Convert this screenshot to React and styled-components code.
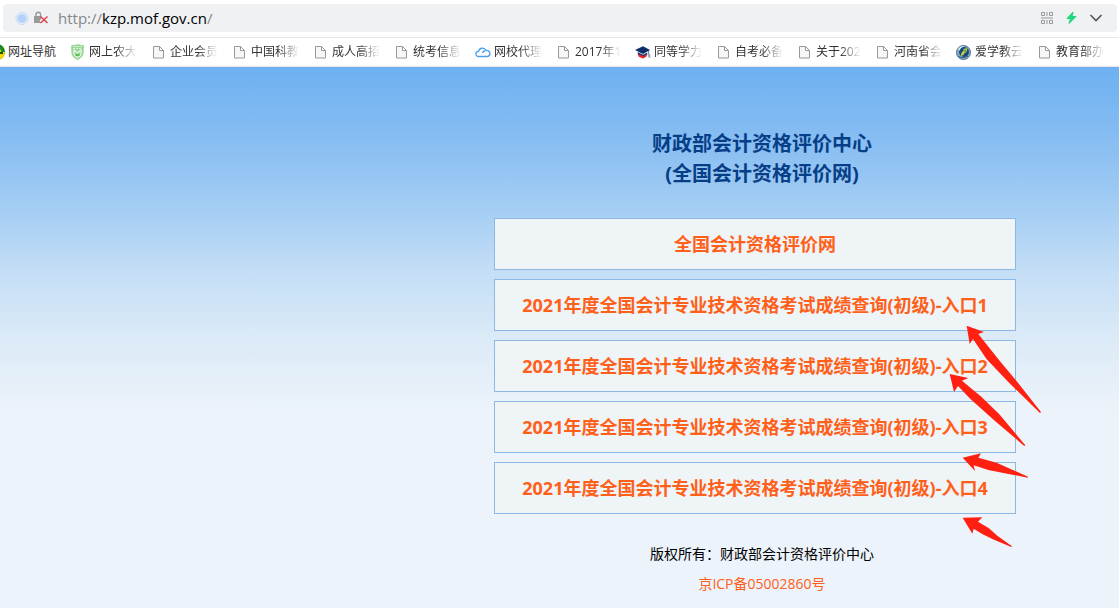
import React, { useState } from "react";
import styled, { createGlobalStyle, css } from "styled-components";

const BOOKMARKS = [
  { label: "网址导航", icon: "nav", full: true },
  { label: "网上农大", icon: "shield" },
  { label: "企业会员" },
  { label: "中国科教" },
  { label: "成人高招" },
  { label: "统考信息" },
  { label: "网校代理", icon: "cloud" },
  { label: "2017年1", width: 46 },
  { label: "同等学力", icon: "cap" },
  { label: "自考必备" },
  { label: "关于202", width: 45 },
  { label: "河南省会" },
  { label: "爱学教云", icon: "globe" },
  { label: "教育部办" }
];

const ENTRIES = [
  "全国会计资格评价网",
  "2021年度全国会计专业技术资格考试成绩查询(初级)-入口1",
  "2021年度全国会计专业技术资格考试成绩查询(初级)-入口2",
  "2021年度全国会计专业技术资格考试成绩查询(初级)-入口3",
  "2021年度全国会计专业技术资格考试成绩查询(初级)-入口4"
];

const GlobalStyle = createGlobalStyle`
  * {
    box-sizing: border-box;
  }

  body {
    margin: 0;
    overflow-x: hidden;
    background: #ecf3fa;
    font-family: "Open Sans", "Noto Sans CJK SC", sans-serif;
  }
`;

const Screen = styled.div`
  display: flex;
  flex-direction: column;
  min-height: 100vh;
`;

const Browser = styled.header`
  background: #fff;
`;

const AddressBar = styled.div`
  display: flex;
  align-items: center;
  height: 28px;
  margin: 4px 2px 5px 3px;
  padding: 0 14px 0 12px;
  border-radius: 4px;
  background: #eff1f3;
`;

const Url = styled.label`
  display: flex;
  flex: 1;
  align-items: center;
  margin-left: 9px;
  color: #85888b;
  font-size: 15px;
  line-height: 20px;
`;

const UrlInput = styled.input`
  field-sizing: content;
  padding: 0;
  border: 0;
  outline: 0;
  background: none;
  color: #000;
  font: inherit;
`;

const IconButton = styled.button`
  display: flex;
  padding: 0;
  border: 0;
  background: none;
  cursor: pointer;
`;

const Tools = styled.div`
  display: flex;
  align-items: center;
  gap: 10px;
`;

const BookmarkBar = styled.nav`
  display: flex;
  align-items: center;
  gap: 14px;
  height: 30px;
  margin-left: -11px;
  overflow: hidden;
  border-top: 1px solid #e6e6e6;
  border-bottom: 1px solid #e6e6e6;
`;

const Bookmark = styled.a`
  display: flex;
  flex: none;
  align-items: center;
  gap: 3px;
  color: #333;
  font-size: 12px;
  line-height: 18px;
  text-decoration: none;
`;

const BookmarkLabel = styled.span`
  width: ${({ width }) => width || 48}px;
  overflow: hidden;
  white-space: nowrap;
  ${({ $fade }) =>
    $fade &&
    css`
      mask-image: linear-gradient(to right, #000 55%, transparent);
    `}
`;

const Page = styled.main`
  flex: 1;
  padding: 62px 0 9px 405px;
  background: linear-gradient(
    #6db0f1,
    #8abff2 80px,
    #a9d0f4 152px,
    #c4def6 205px,
    #dbeaf7 270px,
    #ecf3fa 345px
  );
  text-align: center;
`;

const Title = styled.h1`
  margin: 0 0 29px;
  color: #063e87;
  font-size: 20px;
  line-height: 30px;
`;

const Entries = styled.div`
  position: relative;
  display: flex;
  flex-direction: column;
  gap: 9px;
  max-width: 522px;
  margin: 0 auto;
  left: -7px;
`;

const Entry = styled.a`
  padding: 10px 0;
  border: 1px solid #8bb8e4;
  background: #eff4f7;
  color: #ff6019;
  font-size: 18px;
  font-weight: bold;
  line-height: 30px;
  text-decoration: none;
  white-space: nowrap;
`;

const Arrows = styled.svg`
  position: absolute;
  top: 92px;
  left: 406px;
  fill: #ff2012;
  pointer-events: none;
`;

const Footer = styled.footer`
  margin-top: 25px;
  color: #000;
  font-size: 14px;
  line-height: 30px;
`;

const IcpLink = styled.a`
  display: block;
  color: #ff6019;
  text-decoration: none;
`;

const SiteIcon = () => (
  <svg width="16" height="16" viewBox="0 0 16 16">
    <circle cx="7" cy="8.500" r="6" fill="none" stroke="#c5d9fb" />
    <circle cx="7" cy="8.500" r="4.600" fill="#b5d0fc" />
  </svg>
);

const LockIcon = () => (
  <svg width="18" height="16" viewBox="0 0 18 16" fill="none">
    <path d="M5 7V4.500a2.300 2.300 0 0 1 4.600 0V7" stroke="#999" strokeWidth="1.400" />
    <path d="M3 6h7v3l-1.500 2 1.500 2H3z" fill="#999" />
    <path d="M9.500 6.500l7 6.500M16.500 6.500l-7 6.500" stroke="#e23a45" strokeWidth="1.400" />
  </svg>
);

const QrIcon = () => (
  <svg width="12" height="12" viewBox="0 0 12 12" fill="none" stroke="#999">
    <path d="M.5.5h3v3h-3zM8.500.5h3v3h-3zM.5 8.500h3v3h-3zM8.500 8.500h3v3h-3zM6 0v4M6 8v4M0 6h12" />
  </svg>
);

const BoltIcon = () => (
  <svg width="16" height="14" viewBox="0 0 16 14">
    <path d="M10 1 4 7.500h3.500L6 12.500l7-7H9z" fill="#20d77b" stroke="#20d77b" strokeLinejoin="round" />
  </svg>
);

const ChevronIcon = () => (
  <svg width="14" height="10" viewBox="0 0 14 10" fill="none" stroke="#555" strokeWidth="1.600">
    <path d="M1.500 2 7 7.500 12.500 2" />
  </svg>
);

const BookmarkIcon = ({ type }) => {
  switch (type) {
    case "nav":
      return (
        <svg width="16" height="16" viewBox="0 0 16 16">
          <circle cx="8" cy="8" r="8" fill="#188a23" />
          <path d="M0 8h16A8 8 0 0 1 0 8z" fill="#ffd500" />
          <path d="M8 4a4 4 0 0 1 4 4H8z" fill="#ffe600" />
          <path d="M11 9h3" stroke="#0a5e14" strokeWidth="2" />
        </svg>
      );
    case "shield":
      return (
        <svg width="16" height="16" viewBox="0 0 16 16" fill="none">
          <path d="M1 2q2-2 3.500-1Q8-.5 11.500 1 13 0 14 2l-.500 8Q12 14 7.500 16 3 14 1.500 10z" fill="#9dd898" />
          <path d="M3 4.500h9M3.500 2.500h8" stroke="#dff2dc" strokeDasharray="2 1" />
          <path d="M4 6v3q0 3 3.500 4.500Q11 12 11 9V6L7.500 9z" stroke="#e6f5e4" strokeWidth="1.200" />
          <path d="M5.500 10h4v2h-4z" fill="#5fbb5b" />
        </svg>
      );
    case "cloud":
      return (
        <svg width="16" height="16" viewBox="0 0 16 16" fill="none" stroke="#4d9fee" strokeWidth="1.300">
          <path d="M3.500 12.500a2.600 2.600 0 0 1 0-5.200A4 4 0 0 1 11 6.500a3 3 0 0 1 1.500 6zM10 7q-2 0-2.500 2" />
        </svg>
      );
    case "cap":
      return (
        <svg width="16" height="16" viewBox="0 0 17 16">
          <path d="M0 6 8.500 2 16 6l-7.500 4z" fill="#0f2d68" />
          <path d="M3 8 8.500 11 13 8.500V11l-4.500 2.500L3 11z" fill="#17396f" />
          <path d="M3 10.500 5.500 11l3 1.500 3-1.500 1.500-.5-1 2.500L8.500 15 4 13z" fill="#ee2224" />
          <path d="M14.500 7v3" stroke="#4f6a98" />
          <path d="M13.500 10h2.500l.5 4h-2z" fill="#91a2bf" />
        </svg>
      );
    case "globe":
      return (
        <svg width="16" height="16" viewBox="0 0 16 16">
          <circle cx="7.500" cy="8.500" r="7" fill="#8ba9c6" stroke="#4e7297" />
          <circle cx="8" cy="8" r="5" fill="#164a7c" />
          <path d="M2 12q4 3.500 10 0" stroke="#2c5c8b" fill="none" />
          <path d="M2 5Q4.500 1.500 8.500 2 4.500 3.500 3 7z" fill="#dce7ef" />
          <path d="M4.500 12 6 8 7.500 7V5l4-1-1 4-2 1-1 2z" fill="#c9cf4a" />
          <path d="M7.500 7l3-2-1 3z" fill="#4f973c" />
        </svg>
      );
    default:
      return (
        <svg width="16" height="16" viewBox="0 0 16 16" fill="#f7f7f7" stroke="#999">
          <path d="M2.500 2.500h6l4 4v7.500h-10zM8.500 2.500v4h4" />
        </svg>
      );
  }
};

const App = () => {
  const [host, setHost] = useState("kzp.mof.gov.cn");

  return (
    <Screen>
      <GlobalStyle />
      <Browser>
        <AddressBar>
          <SiteIcon />
          <LockIcon />
          <Url>
            http://
            <UrlInput
              aria-label="地址"
              size={host.length}
              spellCheck={false}
              value={host}
              onChange={e => setHost(e.target.value)}
            />
            /
          </Url>
          <Tools>
            <IconButton aria-label="二维码">
              <QrIcon />
            </IconButton>
            <IconButton aria-label="极速模式">
              <BoltIcon />
            </IconButton>
            <IconButton aria-label="展开">
              <ChevronIcon />
            </IconButton>
          </Tools>
        </AddressBar>
        <BookmarkBar>
          {BOOKMARKS.map(({ label, icon, width, full }) => (
            <Bookmark key={label} href="#">
              <BookmarkIcon type={icon} />
              <BookmarkLabel width={width} $fade={!full}>
                {label}
              </BookmarkLabel>
            </Bookmark>
          ))}
        </BookmarkBar>
      </Browser>
      <Page>
        <Title>
          财政部会计资格评价中心
          <br />
          (全国会计资格评价网)
        </Title>
        <Entries>
          {ENTRIES.map(text => (
            <Entry key={text} href="#">
              {text}
            </Entry>
          ))}
          <Arrows width="160" height="250" viewBox="0 0 480 750">
            <path d="M200 47 252 66 235 72 297 150 352 216 423 306 420 309 330 221 260 148 219 87 209 102z" />
            <path d="M149 192 205 204 186 212 244 260 298 313 376 406 373 408 286 334 212 268 174 228 162 246z" />
            <path d="M188 443 243 430 235 443 290 458 330 476 384 500 383 503 322 491 265 480 221 466 225 483z" />
            <path d="M188 623 247 622 234 635 266 654 292 677 336 709 334 711 282 689 248 673 221 656 217 671z" />
          </Arrows>
        </Entries>
        <Footer>
          版权所有：财政部会计资格评价中心
          <IcpLink href="#">京ICP备05002860号</IcpLink>
        </Footer>
      </Page>
    </Screen>
  );
};

export default App;
